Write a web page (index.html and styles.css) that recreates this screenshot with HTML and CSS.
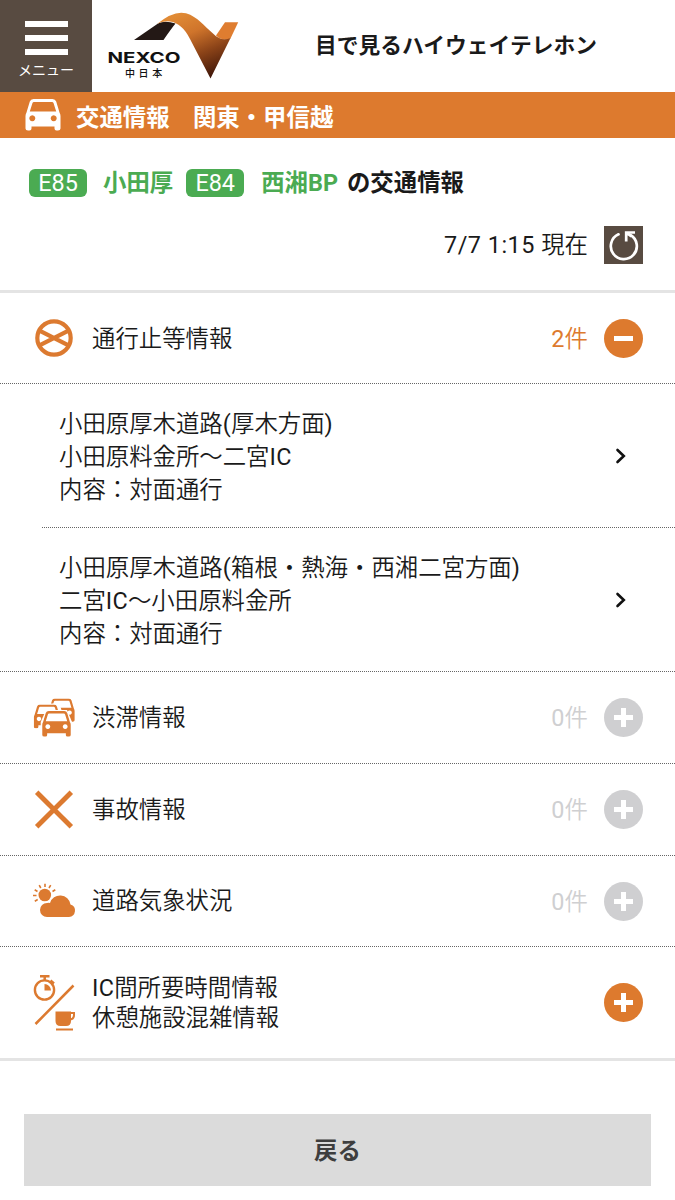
FILE: index.html
```html
<!DOCTYPE html>
<html lang="ja">
<head>
<meta charset="utf-8">
<title>交通情報</title>
<link rel="stylesheet" href="styles.css">
</head>
<body>
<svg class="defs" width="0" height="0" aria-hidden="true">
  <symbol id="car" viewBox="0 0 36 32">
    <path fill="currentColor" fill-rule="evenodd" d="M8.500 0H27.500Q30.300 0 31.200 2.500L34.500 13.500Q35.500 15 35.500 17V29.500Q35.500 31.500 33 31.500H31.500Q29.500 31.500 29.500 29.500V27.500H6.500V29.500Q6.500 31.500 4.500 31.500H3Q.5 31.500 .5 29.500V17Q.5 15 1.500 13.500L4.800 2.500Q5.700 0 8.500 0ZM9 3Q7.800 3 7.400 4.200L4.800 12.500H31.200L28.600 4.200Q28.200 3 27 3ZM7.300 16.200a3 3 0 1 0 .01 0ZM28.700 16.200a3 3 0 1 0 .01 0Z"/>
  </symbol>
</svg>

<header class="header">
  <div class="menu">
    <span class="menu-bar"></span><span class="menu-bar"></span><span class="menu-bar"></span>
    <span class="menu-label">メニュー</span>
  </div>
  <div class="logo">
    <svg class="logo-mark" viewBox="106 10 134 72">
      <defs>
        <linearGradient id="ribbon" gradientUnits="userSpaceOnUse" x1="185" y1="12" x2="213" y2="78">
          <stop offset="0" stop-color="#e08a35"/><stop offset=".3" stop-color="#cf742b"/>
          <stop offset=".62" stop-color="#8b4318"/><stop offset="1" stop-color="#3c1408"/>
        </linearGradient>
      </defs>
      <path fill="#231815" d="M134 40L158 23.500Q165 20 175.500 23.500Q171 29 163.500 40Z"/>
      <path fill="#df7d30" d="M216 35.500L225 22.300H238.200L230.500 38.500Q222 41.500 216 35.500Z"/>
      <path fill="url(#ribbon)" d="M157 24Q174 10 186 13.300C198 17 204 26 213 33.500Q221 42 230.500 38L210.500 78.500L190 39Q182 23 170 21.500Q163 20.500 157 24Z"/>
      <text class="logo-name" x="107.500" y="63.200" textLength="73" lengthAdjust="spacingAndGlyphs">NEXCO</text>
    </svg>
    <span class="logo-sub">中日本</span>
  </div>
  <h1 class="site-title">目で見るハイウェイテレホン</h1>
</header>

<div class="area-bar">
  <svg class="area-icon"><use href="#car"/></svg>
  <span class="area-text">交通情報　関東・甲信越</span>
</div>

<section class="heading">
  <h2 class="routes">
    <span class="badge">E85</span><span class="route route-a">小田厚</span><span class="badge">E84</span><span class="route route-b">西湘BP</span><span class="routes-tail">の交通情報</span>
  </h2>
  <div class="updated">
    <span class="updated-text"><span class="latin time">7/7 1:15 </span>現在</span>
    <svg class="refresh" viewBox="0 0 39 38">
      <rect width="39" height="38" fill="#584b41"/>
      <g fill="none" stroke="#fff" stroke-width="2.700">
        <path stroke-linecap="round" d="M14.500 8.300A13 13 0 1 0 26.500 9"/>
        <path d="M22.200 15.500V6.500H31M22.500 7L27.500 10.500"/>
      </g>
    </svg>
  </div>
</section>

<main class="list">
  <div class="row">
    <svg class="icon" viewBox="0 0 44 44">
      <g fill="none" stroke="#dc7a30" stroke-width="4.200">
        <circle cx="22" cy="22" r="16.700"/><path d="M8 14.800L36 29.200M36 14.800L8 29.200"/>
      </g>
    </svg>
    <span class="label">通行止等情報</span>
    <span class="count active"><span class="latin">2</span>件</span>
    <span class="toggle open active"></span>
  </div>
  <div class="detail-list">
    <div class="detail">
      <p class="detail-text">小田原厚木道路<span class="latin">(</span>厚木方面<span class="latin">)</span><br>小田原料金所～二宮<span class="latin">IC</span><br>内容：対面通行</p>
      <svg class="chevron" viewBox="0 0 12 18"><path d="M2.500 3L8.800 9L2.500 15"/></svg>
    </div>
    <div class="detail">
      <p class="detail-text">小田原厚木道路<span class="latin">(</span>箱根・熱海・西湘二宮方面<span class="latin">)</span><br>二宮<span class="latin">IC</span>～小田原料金所<br>内容：対面通行</p>
      <svg class="chevron" viewBox="0 0 12 18"><path d="M2.500 3L8.800 9L2.500 15"/></svg>
    </div>
  </div>
  <div class="row">
    <svg class="icon" viewBox="32 696 44 44">
      <g color="#dc7a30">
        <use href="#car" x="48.500" y="698.500" width="26.500" height="23.500"/>
        <path fill="#fff" d="M36 703.500H58.500Q60 704 62 712V724H34Z"/>
        <use href="#car" x="33.500" y="704.500" width="27" height="24"/>
        <path fill="#fff" d="M46 710H67L70 717L72 722V738H40.700V722Z"/>
        <use href="#car" x="41.500" y="711" width="30" height="26"/>
      </g>
    </svg>
    <span class="label">渋滞情報</span>
    <span class="count"><span class="latin">0</span>件</span>
    <span class="toggle"></span>
  </div>
  <div class="row">
    <svg class="icon" viewBox="0 0 44 44"><path fill="none" stroke="#dc7a30" stroke-width="4.900" d="M4.700 4.200L39.300 38.800M39.300 4.200L4.700 38.800"/></svg>
    <span class="label">事故情報</span>
    <span class="count"><span class="latin">0</span>件</span>
    <span class="toggle"></span>
  </div>
  <div class="row row-weather">
    <svg class="icon" viewBox="32 879 44 44">
      <g fill="#dc7a30">
        <circle cx="44.800" cy="895" r="6.300"/>
        <path fill="none" stroke="#dc7a30" stroke-width="1.600" d="M45 887V883.800M40.800 888L39.200 885.200M37.500 891.500L34.700 889.800M36.500 895.500H33M37.700 899.500L34.800 901.200M49 888L50.700 885.200M52.500 891.500L55.300 889.800"/>
        <path stroke="#fff" stroke-width="3" paint-order="stroke" d="M47 917A7 7 0 0 1 47 903Q49 902.500 50 903A10.500 10.500 0 0 1 70.500 904.500A6.400 6.400 0 0 1 69 917Z"/>
      </g>
    </svg>
    <span class="label">道路気象状況</span>
    <span class="count"><span class="latin">0</span>件</span>
    <span class="toggle"></span>
  </div>
  <div class="row row-tall">
    <svg class="icon icon-tall" viewBox="32 972 44 62">
      <g fill="none" stroke="#dc7a30">
        <circle cx="44.500" cy="990" r="9.600" stroke-width="2.400"/>
        <path stroke-width="2.500" d="M40 976.300H49.500M44.700 977V981M50.500 980.500L54 983.500M35.500 1024L73.500 985.500"/>
        <path stroke-width="2" d="M69 1013H74V1015Q74 1019.500 69 1019.500M56 1029.500H73"/>
      </g>
      <path fill="#dc7a30" d="M44.500 984V990.500H51A6.500 6.500 0 0 0 44.500 984ZM55.500 1011.500H71V1021Q71 1026 66 1026H60.500Q55.500 1026 55.500 1021Z"/>
    </svg>
    <span class="label"><span class="latin">IC</span>間所要時間情報<br>休憩施設混雑情報</span>
    <span class="toggle active"></span>
  </div>
</main>

<button class="back">戻る</button>
</body>
</html>
```

FILE: styles.css
```css
* { box-sizing: border-box; }
body {
  margin: 0;
  height: 1200px;
  overflow: hidden;
  background: #fff;
  color: #1a1a1a;
  font-family: Roboto, "Noto Sans CJK JP", sans-serif;
  font-size: 23.4px;
  font-weight: 350;
}
h1, h2, p { margin: 0; }
.defs { display: block; }
.latin { font-weight: 400; letter-spacing: .3px; }
.time { letter-spacing: .5px; }

.header { display: flex; height: 92px; }
.menu {
  width: 92px;
  padding-top: 21px;
  display: flex;
  flex-direction: column;
  align-items: center;
  gap: 8px;
  background: #584b41;
  color: #fff;
}
.menu-bar { width: 43px; height: 6px; background: #fff; }
.menu-label { font-size: 14px; line-height: 16px; font-weight: 400; margin-top: -1px; }
.logo { position: relative; width: 134px; height: 72px; margin: 10px 0 0 14px; }
.logo-mark { display: block; width: 134px; height: 72px; }
.logo-name { font: 700 14.5px Inter, sans-serif; fill: #111; }
.logo-sub {
  position: absolute;
  left: 19px;
  top: 57px;
  font: 500 10px/12px "Noto Sans CJK JP", sans-serif;
  letter-spacing: 3.6px;
  color: #111;
}
.site-title {
  margin-left: 75px;
  padding-top: 1px;
  font-size: 21.75px;
  font-weight: 700;
  line-height: 90px;
  white-space: nowrap;
}

.area-bar {
  display: flex;
  align-items: center;
  height: 46px;
  padding-left: 25px;
  background: #dd7a2e;
  color: #fff;
  font-weight: 700;
}
.area-text { padding-top: 5px; line-height: 40px; }
.area-icon { width: 36px; height: 32px; margin-right: 15px; }

.heading { height: 155px; padding-top: 29px; border-bottom: 3px solid #e4e4e4; }
.routes {
  display: flex;
  align-items: center;
  height: 32px;
  padding-left: 29px;
  font-size: 23.4px;
  font-weight: 700;
}
.badge {
  width: 58px;
  height: 28px;
  border-radius: 6px;
  background: #4bab52;
  color: #fff;
  font-weight: 400;
  line-height: 29px;
  text-align: center;
}
.route { color: #4bab52; }
.route, .routes-tail { padding-bottom: 4px; }
.route-a { margin: 0 13px 0 16px; }
.route-b { margin: 0 9px 0 17px; }
.updated {
  display: flex;
  align-items: center;
  justify-content: flex-end;
  gap: 16px;
  height: 38px;
  margin-top: 27px;
  padding-right: 32px;
}
.updated-text { padding-bottom: 4px; white-space: pre; }
.refresh { width: 39px; height: 38px; }

.list { border-bottom: 3px solid #e4e4e4; }
.row {
  display: flex;
  align-items: center;
  height: 92px;
  padding: 0 32px;
  border-top: 1px dotted #666;
}
.row:first-child { height: 90px; border-top: 0; }
.row-weather { height: 91px; }
.row-tall { height: 112px; }
.icon { width: 44px; height: 44px; margin-right: 16px; }
.icon-tall { height: 62px; }
.label { flex: 1; padding-top: 1px; line-height: 30px; }
.row-weather .label { padding-top: 0; }
.count { margin-right: 16px; padding-bottom: 3px; color: #cfcfd1; }
.toggle {
  width: 39px;
  height: 39px;
  border-radius: 50%;
  background:
    linear-gradient(#fff, #fff) center / 19px 5px no-repeat,
    linear-gradient(#fff, #fff) center / 5px 19px no-repeat,
    #cfcfd1;
}
.toggle.active { background-color: #dd7a2e; }
.toggle.open { background-size: 19px 5px, 0 0; }
.count.active { color: #dd7a2e; }

.detail-list { border-top: 1px dotted #666; }
.detail {
  display: flex;
  align-items: center;
  justify-content: space-between;
  height: 144px;
  margin-left: 42px;
  padding: 0 48px 0 17px;
}
.detail + .detail { border-top: 1px dotted #666; }
.detail:first-child { height: 143px; }
.detail-text { padding-top: 3px; line-height: 33px; }
.chevron { width: 12px; height: 18px; fill: none; stroke: #111; stroke-width: 2.6; stroke-linecap: round; }

.back {
  display: block;
  width: 627px;
  height: 72px;
  margin: 53px 24px 0;
  padding: 0 0 2px;
  border: 0;
  background: #dbdbdb;
  color: #3e3e3e;
  font: 700 23.4px "Noto Sans CJK JP", sans-serif;
}
```
